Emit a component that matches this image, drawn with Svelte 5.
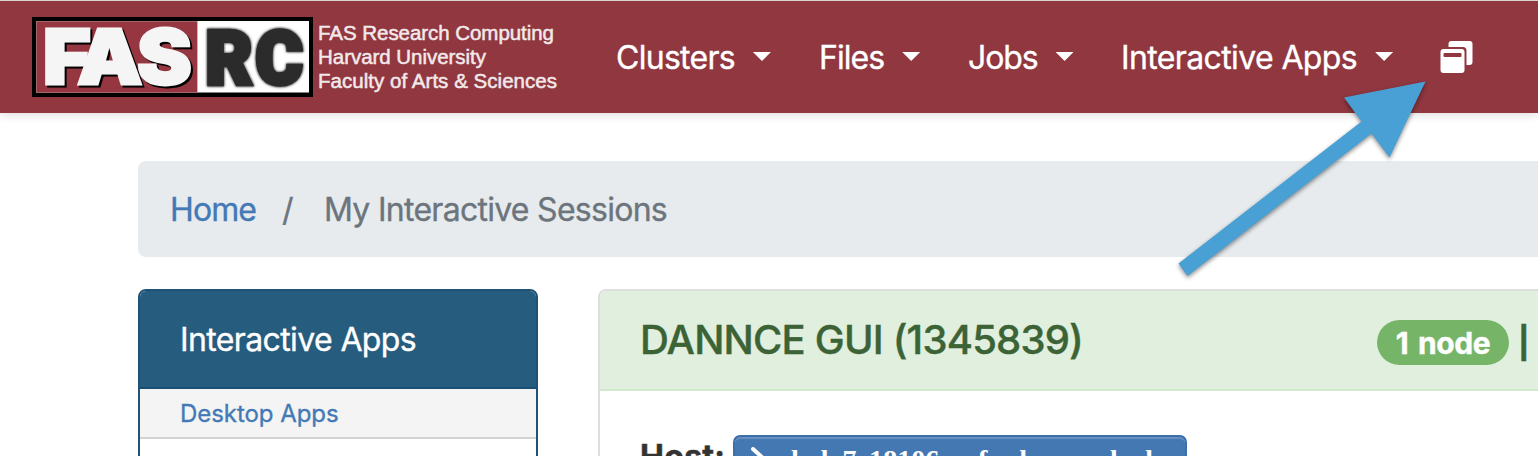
<script>
  const menus = [
    { label: 'Clusters', cls: 'clusters' },
    { label: 'Files', cls: 'files' },
    { label: 'Jobs', cls: 'jobs' },
    { label: 'Interactive Apps', cls: 'apps' }
  ];
</script>

<div class="page">
  <header>
    <svg class="logo" width="530" height="84" viewBox="0 0 530 84">
      <rect x="0" y="0" width="281" height="80" fill="#000" />
      <rect x="4.5" y="4.5" width="161" height="71" fill="#963640" stroke="#b77b80" stroke-width="0.8" />
      <rect x="165.500" y="4" width="111.500" height="71.500" fill="#fff" />
      <g class="fas">
        <text transform="translate(11 67) scale(1.09 1)" x="0 31.500 86.500" y="0">FAS</text>
      </g>
      <g class="rc">
        <text transform="translate(173.500 67) scale(.96 1)" x="0 52" y="0">RC</text>
      </g>
      <g class="tagline">
        <text x="286" y="22.500" textLength="236">FAS Research Computing</text>
        <text x="286" y="46.800" textLength="168">Harvard University</text>
        <text x="286" y="71" textLength="239">Faculty of Arts &amp; Sciences</text>
      </g>
    </svg>
    <nav>
      {#each menus as m}
        <a class={m.cls}><span>{m.label}</span><i class="caret"></i></a>
      {/each}
    </nav>
    <svg class="sessions" width="34" height="33" viewBox="0 0 34 33">
      <path d="M8.500 6V3Q8.500 0 11.500 0H29.500Q32.500 0 32.500 3V21Q32.500 24 29.500 24H26.500V9.500Q26.500 6 23 6Z" fill="#fff" />
      <path fill-rule="evenodd" d="M3.500 8H21.500Q24.500 8 24.500 11V29Q24.500 32 21.500 32H3.500Q.5 32 .5 29V11Q.5 8 3.500 8ZM4.500 12Q3.500 12 3.500 13V15Q3.500 16 4.500 16H20.500Q21.500 16 21.500 15V13Q21.500 12 20.500 12Z" fill="#fff" />
    </svg>
  </header>

  <main>
    <div class="breadcrumb">
      <a class="home">Home</a><span class="slash">/</span><span class="current">My Interactive Sessions</span>
    </div>
    <div class="columns">
      <aside>
        <h2><span>Interactive Apps</span></h2>
        <p><span>Desktop Apps</span></p>
      </aside>
      <section>
        <div class="head">
          <h1>DANNCE GUI (1345839)</h1>
          <span class="badge">1 node</span>
          <span class="sep">|</span>
        </div>
        <div class="host">
          <strong>Host:</strong>
          <a class="button">
            <svg width="36" height="26" viewBox="0 0 36 26"><path d="M2 2L13 12L2 22M15 24H34" fill="none" stroke="#fff" stroke-width="4" stroke-linecap="round" /></svg>
            <span>holy7c18106.rc.fas.harvard.edu</span>
          </a>
        </div>
      </section>
    </div>
  </main>

  <svg class="arrow" width="260" height="210" viewBox="1170 75 260 210">
    <path d="M1178.500 263.500L1361.500 121.500L1344 97.500L1425.500 81.500L1389.500 157.500L1371.500 133.500L1187.500 276Z" fill="#49a0d4" />
  </svg>
</div>

<style>
  :global(body) { margin: 0; background: #fff; }
  .page {
    position: relative;
    width: 1538px;
    height: 456px;
    overflow: hidden;
    font-family: Inter, sans-serif;
    font-size: 32px;
    line-height: 48px;
    letter-spacing: -.72px;
    color: #333;
  }
  header {
    box-sizing: border-box;
    height: 113px;
    display: flex;
    align-items: flex-start;
    padding-left: 32px;
    background: #903740;
    border-top: 1px solid #d8d4d2;
    box-shadow: 0 1px 10px rgba(0, 0, 0, .16);
  }
  .logo { flex: none; margin-top: 16px; letter-spacing: 0; }
  .fas { filter: drop-shadow(2.500px 2px 0 #000); }
  .fas text { font: 900 75px Inter, sans-serif; fill: #f5f5f5; stroke: #f5f5f5; stroke-width: 3px; }
  .rc { filter: drop-shadow(0 0 1px #555) drop-shadow(0 0 1px #777); }
  .rc text { font: 900 75px Roboto, sans-serif; fill: #2b2b2b; stroke: #2b2b2b; stroke-width: 4.500px; }
  .tagline text { font: 20.500px "Liberation Sans", sans-serif; fill: #f3e9ea; stroke: #f3e9ea; stroke-width: .5px; }
  nav { display: flex; margin: 33px 0 0 54px; width: 824px; flex: none; color: #fff; }
  nav a, .breadcrumb, h2, p { -webkit-text-stroke: .35px currentColor; }
  nav a { display: flex; white-space: nowrap; }
  .clusters { width: 203px; }
  .files { width: 149px; }
  .jobs { width: 153px; }
  .files { letter-spacing: -.95px; }
  .jobs { letter-spacing: -1.1px; }
  .apps { letter-spacing: -.62px; }
  .caret {
    width: 18px;
    height: 9px;
    margin: 18px 0 0 18px;
    background: #fff;
    clip-path: polygon(0 0, 100% 0, 50% 100%);
  }
  .sessions { margin-top: 40px; flex: none; }
  main { padding: 48px 0 0 138px; }
  .breadcrumb {
    display: flex;
    box-sizing: border-box;
    height: 96px;
    padding: 25px 32px;
    background: #e7ebee;
    border-radius: 8px 0 0 8px;
    color: #6c757d;
    white-space: nowrap;
  }
  .home { width: 112px; color: #4379b5; letter-spacing: -.9px; }
  .slash { width: 42px; }
  .columns { display: flex; margin-top: 32px; gap: 60px; }
  aside {
    box-sizing: border-box;
    width: 400px;
    height: 240px;
    flex: none;
    border: 2px solid #1f5275;
    border-radius: 8px;
    overflow: hidden;
    background: #fff;
  }
  h2 {
    box-sizing: border-box;
    margin: 0;
    height: 98px;
    padding: 25px 40px;
    font: inherit;
    letter-spacing: -.62px;
    color: #fff;
    background: #265c7e;
    border-bottom: 2px solid #1a4e72;
  }
  p {
    box-sizing: border-box;
    height: 50px;
    margin: 0;
    padding-left: 40px;
    font-size: 24px;
    line-height: 50px;
    letter-spacing: -.05px;
    color: #4379b5;
    background: #f4f4f4;
    border-bottom: 2px solid #d3d3d3;
  }
  section {
    box-sizing: border-box;
    width: 1000px;
    height: 240px;
    flex: none;
    border: 2px solid #dedede;
    border-radius: 8px;
    overflow: hidden;
  }
  .head {
    box-sizing: border-box;
    height: 100px;
    display: flex;
    align-items: flex-start;
    padding: 25px 0 0 40px;
    background: #e0efde;
    border-bottom: 2px solid #d2e9cf;
    color: #3c6336;
    white-space: nowrap;
  }
  h1 {
    margin: 0;
    width: 737px;
    font-size: 40px;
    line-height: 48px;
    font-weight: 500;
    letter-spacing: -.8px;
    -webkit-text-stroke: .4px currentColor;
  }
  .badge {
    width: 132px;
    height: 45px;
    margin-top: 4px;
    flex: none;
    border-radius: 23px;
    background: #76b568;
    color: #fff;
    font-size: 30px;
    line-height: 46px;
    font-weight: 700;
    letter-spacing: -.4px;
    word-spacing: 3px;
    text-align: center;
    -webkit-text-stroke: .4px currentColor;
  }
  .sep {
    font-size: 31px;
    line-height: 48px;
    margin: 3px 0 0 9px;
    font-weight: 700;
    -webkit-text-stroke: .5px currentColor;
  }
  .host { display: flex; padding: 44px 0 0 40px; }
  strong { width: 93px; font-weight: 700; letter-spacing: .3px; margin-top: -2px; -webkit-text-stroke: .5px currentColor; }
  .button {
    box-sizing: border-box;
    width: 454px;
    height: 62px;
    display: flex;
    padding: 10px 16px;
    border-radius: 7px;
    background: #4478b3;
    border: 2px solid #3c70ab;
    box-shadow: inset 0 2px #6790c0;
    color: #fff;
    font: bold 28px/36px "Liberation Serif", serif;
    letter-spacing: .05px;
    white-space: nowrap;
  }
  .button svg { flex: none; }
  .button span { margin: -5px 0 0 4px; }
  .arrow { position: absolute; left: 1170px; top: 75px; filter: drop-shadow(0 2px 2px rgba(0, 0, 0, .45)); }
</style>
